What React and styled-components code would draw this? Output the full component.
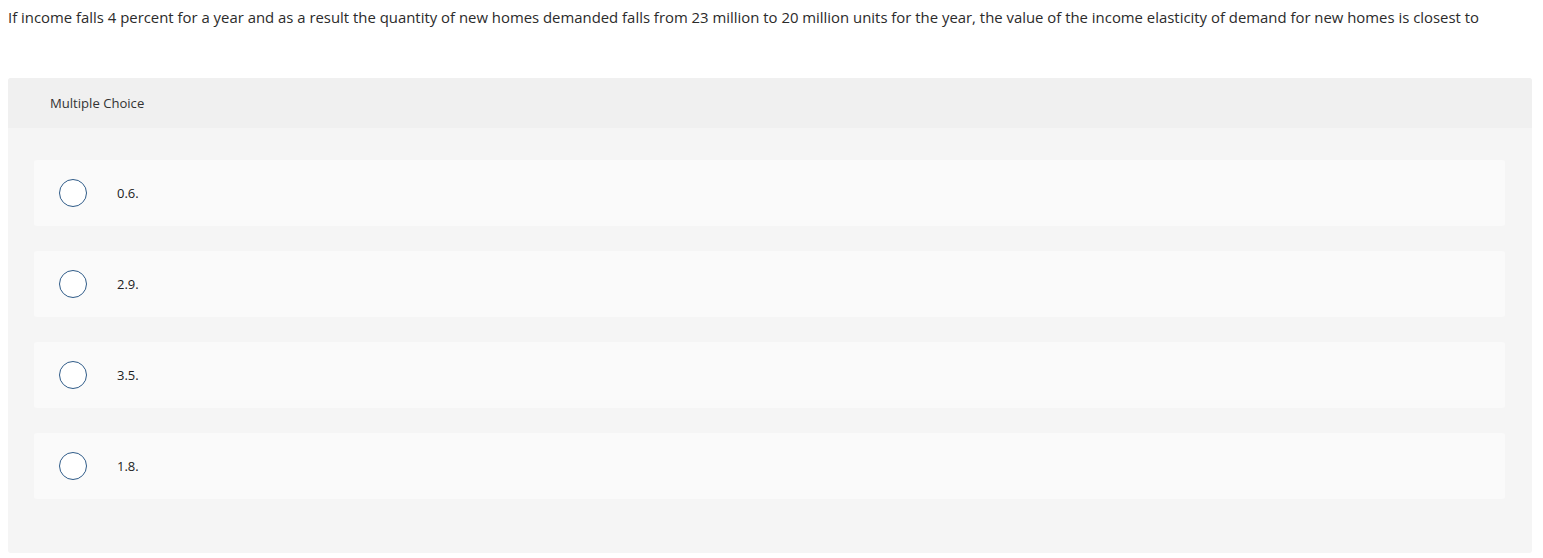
import React from 'react';
import styled, { createGlobalStyle } from 'styled-components';

const GlobalStyle = createGlobalStyle`
	body {
		margin: 0;
		padding: 8px 11px 0 8px;
		background: #fff;
		font-family: 'Open Sans', Lato, sans-serif;
		color: #333;
	}
`;

const choices = ['0.6.', '2.9.', '3.5.', '1.8.'];

const App = () => {
	return (
		<>
			<GlobalStyle />
			<Question>
				If income falls 4 percent for a year and as a result the quantity of new homes demanded falls from 23 million to 20 million units for the year, the value of the income elasticity of demand for new homes is closest to
			</Question>
			<Panel>
				<Header>Multiple Choice</Header>
				<Choices>
					{choices.map((c) => (
						<Choice key={c}>
							<Radio />
							<Label>{c}</Label>
						</Choice>
					))}
				</Choices>
			</Panel>
		</>
	);
};

const Question = styled.p`
	margin: 0;
	font-size: 14.9px;
	line-height: 18px;
	color: #2b2b2b;
	white-space: nowrap;
`;

const Panel = styled.div`
	margin-top: 52px;
	background: #f5f5f5;
	border-radius: 3px;
	overflow: hidden;
`;

const Header = styled.div`
	height: 50px;
	display: flex;
	align-items: center;
	padding-left: 42px;
	background: #f0f0f0;
	font-size: 13.1px;
	color: #333;
`;

const Choices = styled.div`
	display: flex;
	flex-direction: column;
	gap: 25px;
	padding: 32px 27px 54px 26px;
`;

const Choice = styled.div`
	height: 66px;
	display: flex;
	align-items: center;
	padding-left: 25px;
	background: #fafafa;
	border-radius: 3px;
`;

const Radio = styled.span`
	box-sizing: border-box;
	width: 28px;
	height: 28px;
	border: 1.5px solid #2f5b88;
	border-radius: 50%;
	background: #fff;
	flex-shrink: 0;
`;

const Label = styled.span`
	margin-left: 30px;
	font-size: 13px;
	color: #222;
`;

export default App;
